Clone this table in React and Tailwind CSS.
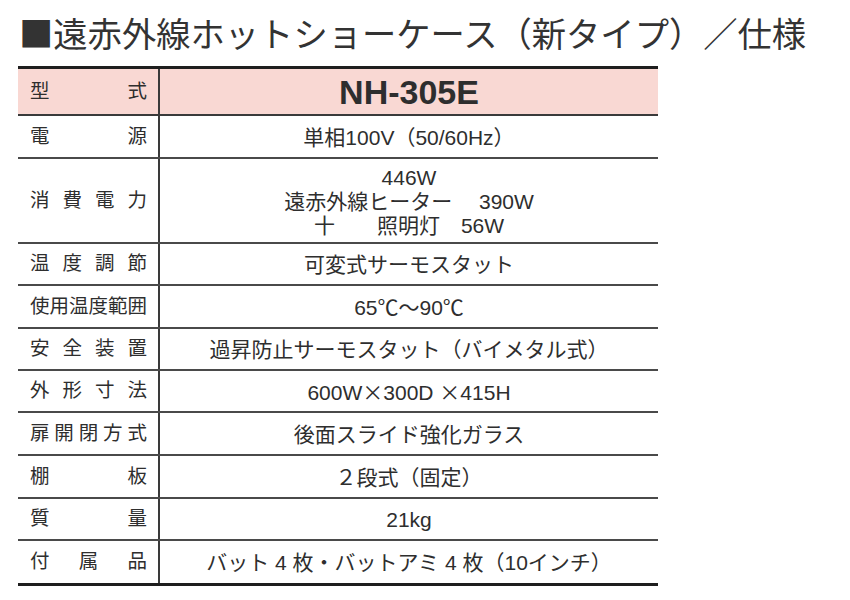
const X = () => <span className="font-['Noto_Sans_CJK_JP',sans-serif]">×</span>;

const rows = [
    { label: ["電", "源"], value: ["単相100V（50/60Hz）"], h: "h-[43px]" },
    {
        label: ["消", "費", "電", "力"],
        value: ["446W", "遠赤外線ヒーター　 390W", "十　　照明灯　56W"],
        h: "h-[85px]",
    },
    { label: ["温", "度", "調", "節"], value: ["可変式サーモスタット"], h: "h-[42px]" },
    { label: ["使", "用", "温", "度", "範", "囲"], value: ["65℃～90℃"], h: "h-[43px]" },
    { label: ["安", "全", "装", "置"], value: ["過昇防止サーモスタット（バイメタル式）"], h: "h-[42px]" },
    {
        label: ["外", "形", "寸", "法"],
        value: [
            <>
                600W<X />300D <X />415H
            </>,
        ],
        h: "h-[42px]",
    },
    { label: ["扉", "開", "閉", "方", "式"], value: ["後面スライド強化ガラス"], h: "h-[43px]" },
    { label: ["棚", "板"], value: ["２段式（固定）"], h: "h-[43px]" },
    { label: ["質", "量"], value: ["21kg"], h: "h-[42px]" },
    { label: ["付", "属", "品"], value: ["バット 4 枚・バットアミ 4 枚（10インチ）"], h: "h-[45px]", last: true },
];

const font = "font-['Liberation_Sans','Noto_Sans_CJK_JP',sans-serif]";

function Label({ chars }) {
    return (
        <div className="w-[142px] shrink-0 h-full flex items-center justify-between pl-[12px] pr-[11px] border-r-2 border-[#3a3a3a] text-[19.5px]">
            {chars.map((c, i) => (
                <span key={i}>{c}</span>
            ))}
        </div>
    );
}

export default function App() {
    return (
        <div className={`w-[850px] h-[600px] bg-white text-[#2e2e2e] ${font}`}>
            <div className="h-[66px] pl-[19px] pt-[11px]">
                <h1 className="text-[34.3px] leading-[42px] text-[#333] font-['Noto_Sans_CJK_JP',sans-serif] font-normal whitespace-nowrap">
                    ■遠赤外線ホットショーケース（新タイプ）／仕様
                </h1>
            </div>

            <div className="ml-[18px] w-[640px] border-t-[3px] border-[#1e1e1e] text-[21px]">
                <div className="h-[47px] flex bg-[#f9d8d3] border-b-2 border-[#3a3a3a]">
                    <Label chars={["型", "式"]} />
                    <div className="flex-1 flex items-center justify-center font-bold text-[34px] pt-[2px]">
                        NH-305E
                    </div>
                </div>
                {rows.map((row) => (
                    <div
                        key={row.label.join("")}
                        className={`${row.h} flex ${
                            row.last ? "border-b-[3px] border-[#1e1e1e]" : "border-b-2 border-[#4a4a4a]"
                        }`}
                    >
                        <Label chars={row.label} />
                        <div className="flex-1 flex flex-col items-center justify-center leading-[24px] whitespace-pre pt-[2px]">
                            {row.value.map((line, i) => (
                                <div key={i}>{line}</div>
                            ))}
                        </div>
                    </div>
                ))}
            </div>
        </div>
    );
}
